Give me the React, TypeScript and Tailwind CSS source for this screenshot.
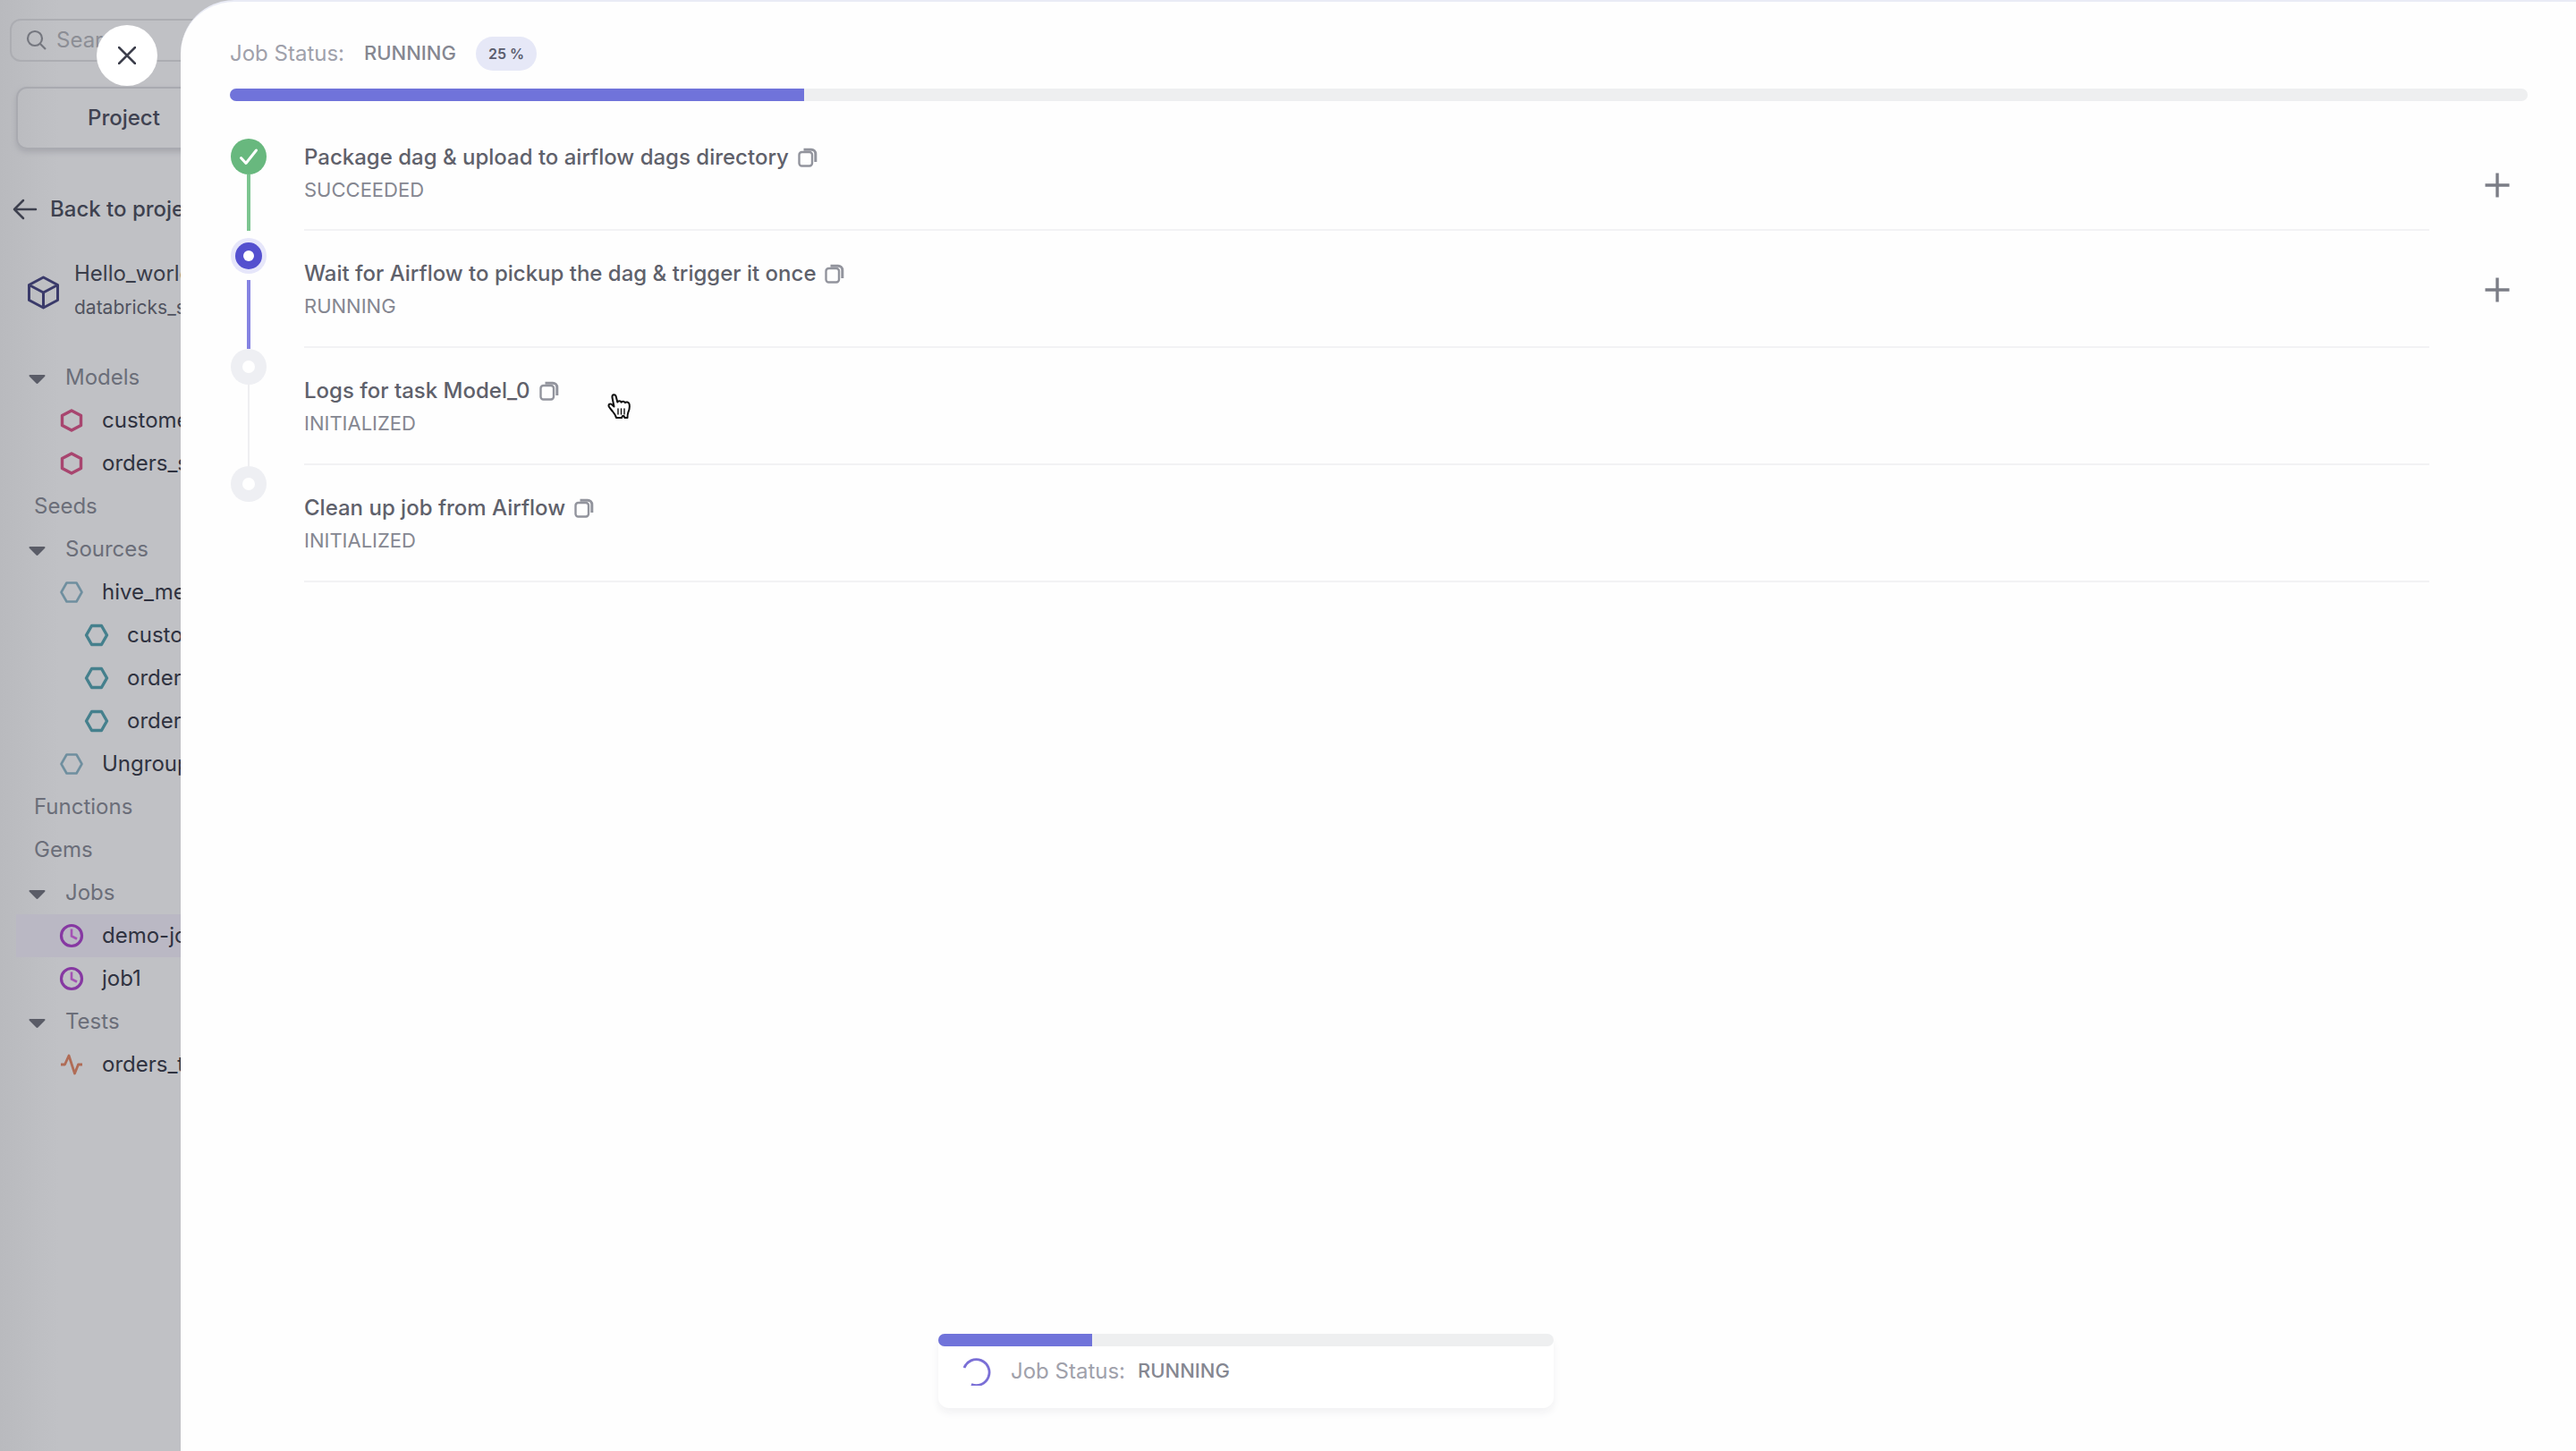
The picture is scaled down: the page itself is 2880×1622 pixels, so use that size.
import React from "react";

type TreeKind = "group" | "model" | "source" | "table" | "job" | "test" | "plain";

const tree: { label: string; kind: TreeKind; active?: boolean }[] = [
  { label: "Models", kind: "group" },
  { label: "customers", kind: "model" },
  { label: "orders_s", kind: "model" },
  { label: "Seeds", kind: "plain" },
  { label: "Sources", kind: "group" },
  { label: "hive_met", kind: "source" },
  { label: "custom", kind: "table" },
  { label: "orders", kind: "table" },
  { label: "orders", kind: "table" },
  { label: "Ungroup", kind: "source" },
  { label: "Functions", kind: "plain" },
  { label: "Gems", kind: "plain" },
  { label: "Jobs", kind: "group" },
  { label: "demo-job", kind: "job", active: true },
  { label: "job1", kind: "job" },
  { label: "Tests", kind: "group" },
  { label: "orders_t", kind: "test" },
];

const steps = [
  { title: "Package dag & upload to airflow dags directory", status: "SUCCEEDED" },
  { title: "Wait for Airflow to pickup the dag & trigger it once", status: "RUNNING" },
  { title: "Logs for task Model_0", status: "INITIALIZED" },
  { title: "Clean up job from Airflow", status: "INITIALIZED" },
];

function HexUp() {
  return (
    <svg className="size-7 shrink-0 text-[#a8456f]" viewBox="0 0 28 28" fill="none" stroke="currentColor" strokeWidth="3.400" strokeLinejoin="round">
      <path d="M14 3 24.500 8.500v11L14 25 3.500 19.500v-11z" />
    </svg>
  );
}

function HexSide({ bold }: { bold?: boolean }) {
  return (
    <svg
      className={bold ? "size-7 shrink-0 text-[#45808d]" : "size-7 shrink-0 text-[#6f8f9f]"}
      viewBox="0 0 28 28"
      fill="none"
      stroke="currentColor"
      strokeWidth={bold ? 3.4 : 2.6}
      strokeLinejoin="round"
    >
      <path d="M8.500 3.500h11L25.500 14l-6 10.500h-11L2.500 14z" />
    </svg>
  );
}

function Clock() {
  return (
    <svg className="size-7 shrink-0 text-[#8638a2]" viewBox="0 0 28 28" fill="none" stroke="currentColor" strokeWidth="3.200">
      <circle cx="14" cy="14" r="11.500" />
      <path d="M14 6.500v8l6 3" stroke="#a453b4" strokeWidth="2.600" />
    </svg>
  );
}

function Pulse() {
  return (
    <svg className="size-7 shrink-0 text-[#b06c56]" viewBox="0 0 28 28" fill="none" stroke="currentColor" strokeWidth="2.800" strokeLinejoin="round">
      <path d="M2 14h4.500L11 4l6.500 20 4-10H26" />
    </svg>
  );
}

function TreeRow({ label, kind, active }: { label: string; kind: TreeKind; active?: boolean }) {
  if (kind === "plain") {
    return <li className="flex h-12 items-center pl-[38px] text-[#6b6e79]">{label}</li>;
  }
  if (kind === "group") {
    return (
      <li className="flex h-12 items-center gap-[22px] pl-8 text-[#6b6e79]">
        <svg className="mt-1 h-2.5 w-[19px] shrink-0" viewBox="0 0 19 10" fill="#5a5c67">
          <path d="M1.500 0h16a1 1 0 0 1 .7 1.700L10.500 9.500a1.400 1.400 0 0 1-2 0L.8 1.700A1 1 0 0 1 1.500 0z" />
        </svg>
        {label}
      </li>
    );
  }
  const indent = kind === "table" ? "pl-[76px]" : "pl-12";
  return (
    <li className={`ml-[18px] flex h-12 items-center whitespace-nowrap text-[#2f3240] ${indent} ${active ? "bg-[#bab8c4]" : ""}`}>
      <span className="flex items-center gap-5">
        {kind === "model" && <HexUp />}
        {kind === "source" && <HexSide />}
        {kind === "table" && <HexSide bold />}
        {kind === "job" && <Clock />}
        {kind === "test" && <Pulse />}
        {label}
      </span>
    </li>
  );
}

function Sidebar() {
  return (
    <aside className="w-[262px] shrink-0 overflow-hidden bg-linear-to-r from-[#b9babe] to-[#c0c1c5] to-25%">
      <label className="mt-[21px] ml-[11px] flex h-12 w-[300px] items-center gap-2.5 rounded-xl border-2 border-[#acadb2] px-4">
        <svg className="size-6 shrink-0" viewBox="0 0 24 24" fill="none" stroke="#75777f" strokeWidth="2.200">
          <circle cx="10" cy="10" r="8" />
          <path d="m16 16 6 6" />
        </svg>
        <input className="w-40 bg-transparent text-2xl placeholder:text-[#8c8e95]" placeholder="Search" aria-label="Search" />
      </label>
      <button className="mt-7 ml-[18px] flex h-[70px] w-[300px] items-center rounded-xl border-2 border-[#a9aab0] pl-[78px] text-2xl font-medium text-[#3f4251] shadow-[0_3px_6px_#a6a7ad]">
        Project
      </button>
      <a href="#back" className="mt-[47px] ml-3.5 flex h-10 items-center gap-3.5 text-2xl font-medium whitespace-nowrap text-[#3e414f]">
        <svg className="h-6 w-7 shrink-0" viewBox="0 0 28 24" fill="none" stroke="currentColor" strokeWidth="2.500" strokeLinecap="round" strokeLinejoin="round">
          <path d="M26 12H2M12 2 2 12l10 10" />
        </svg>
        Back to project
      </a>
      <div className="mt-8 flex items-end gap-4 pl-[30px]">
        <svg className="mb-4 h-[38px] w-[37px] shrink-0" viewBox="0 0 37 38" fill="none" stroke="#3a3a6a" strokeWidth="3" strokeLinejoin="round">
          <path d="M18.500 2 34.500 10.500v17L18.500 36 2.500 27.500v-17zM2.500 10.500l16 8.500 16-8.500M18.500 19v17" />
        </svg>
        <div className="whitespace-nowrap">
          <div className="text-2xl leading-10 text-[#3a3d4a]">Hello_world</div>
          <div className="text-[21px] leading-9 text-[#50535f]">databricks_sql</div>
        </div>
      </div>
      <ul className="mt-9 text-2xl">
        {tree.map((t, i) => (
          <TreeRow key={i} {...t} />
        ))}
      </ul>
    </aside>
  );
}

function CopyIcon() {
  return (
    <svg className="size-[22px]" viewBox="0 0 22 22" fill="none" stroke="#92949d" strokeWidth="2.400">
      <rect x="1.500" y="5" width="14.500" height="15.500" rx="3" />
      <path d="M6.500 2.200H15a4.800 4.800 0 0 1 4.800 4.800v9" strokeWidth="3" />
    </svg>
  );
}

function PendingDot() {
  return (
    <div className="flex size-10 items-center justify-center rounded-full bg-[#eeeff3]">
      <div className="size-3.5 rounded-full bg-white" />
    </div>
  );
}

function Timeline() {
  return (
    <div className="flex w-[42px] shrink-0 flex-col items-center">
      <div className="flex size-10 items-center justify-center rounded-full bg-[#68b87e]">
        <svg className="size-6" viewBox="0 0 24 24" fill="none" stroke="#fff" strokeWidth="3" strokeLinecap="round" strokeLinejoin="round">
          <path d="m3.500 13.500 5.500 6L20.500 5" />
        </svg>
      </div>
      <div className="h-[63px] w-1 bg-[#7cc590]" />
      <div className="mt-2 flex size-10 items-center justify-center rounded-full bg-[#e6e6fa]">
        <div className="flex size-[30px] items-center justify-center rounded-full bg-[#5450cf]">
          <div className="size-3 rounded-full bg-white" />
        </div>
      </div>
      <div className="mt-[7px] h-[77px] w-1 bg-[#8583e2]" />
      <PendingDot />
      <div className="h-[91px] w-0.5 bg-[#efeff1]" />
      <PendingDot />
    </div>
  );
}

function PlusButton({ label }: { label: string }) {
  return (
    <button aria-label={label} className="flex size-10 items-center justify-center">
      <svg className="size-7" viewBox="0 0 28 28" stroke="#7b7d86" strokeWidth="3.400">
        <path d="M14 .5v27M.5 14h27" />
      </svg>
    </button>
  );
}

function ProgressBar({ value, label }: { value: number; label: string }) {
  return (
    <div className="h-3.5 overflow-hidden rounded-full bg-[#eeeff0]" role="progressbar" aria-label={label} aria-valuenow={value}>
      <div className="h-full bg-[#7073da]" style={{ width: `${value}%` }} />
    </div>
  );
}

export default function App() {
  return (
    <div className="relative flex min-h-screen overflow-hidden bg-[#c0c1c5] font-['Inter',sans-serif] text-2xl">
      <Sidebar />

      <main className="relative -ml-[60px] min-w-0 flex-1 rounded-tl-[60px] border-t-2 border-[#e9ebf5] bg-[#fefefe] pr-[54px] pl-[55px]">
        <header className="mt-[38px] flex h-10 items-center">
          <span className="text-[#a0a1ab]">Job Status:</span>
          <span className="ml-[22px] text-[22px] font-medium text-[#858791]">RUNNING</span>
          <span className="ml-[22px] flex h-[38px] items-center rounded-full bg-[#e6e8f7] px-3.5 text-base font-semibold text-[#5a5c6e]">25 %</span>
        </header>
        <div className="mt-[19px]">
          <ProgressBar value={25} label="Job progress" />
        </div>

        <div className="mt-[42px] flex">
          <Timeline />
          <ol className="ml-[41px] min-w-0 flex-1">
            {steps.map((s, i) => (
              <li key={i} className={`border-b-2 border-[#f2f2f4] ${i === 0 ? "h-[103px] pt-px" : "h-[131px] pt-[28px]"}`}>
                <div className="flex h-10 items-center gap-2.5 font-medium text-[#5f616b]">
                  {s.title}
                  <button aria-label={`Copy ${s.title}`}>
                    <CopyIcon />
                  </button>
                </div>
                <div className="text-[22px] leading-8 text-[#858791]">{s.status}</div>
              </li>
            ))}
          </ol>
          <div className="ml-14 flex w-[54px] shrink-0 flex-col gap-[77px] pt-8">
            <PlusButton label="Expand package step" />
            <PlusButton label="Expand wait step" />
          </div>
        </div>
      </main>

      <button aria-label="Close" className="absolute top-[28px] left-[108px] flex size-[68px] items-center justify-center rounded-full bg-white">
        <svg className="size-5" viewBox="0 0 20 20" stroke="#3d3f4c" strokeWidth="2.500" strokeLinecap="round">
          <path d="m1 1 18 18M19 1 1 19" />
        </svg>
      </button>

      <section className="absolute bottom-12 left-[1049px] h-[83px] w-[688px] rounded-xl bg-white shadow-[0_5px_10px_#f1f1f3]">
        <ProgressBar value={25} label="Current job progress" />
        <div className="mt-2 flex h-10 items-center pl-[27px]">
          <svg className="size-8" viewBox="0 0 32 32" fill="none" stroke="#7a6fd6" strokeWidth="2.800">
            <path d="M2 12a14.500 14.500 0 1 1 8 18.500" />
          </svg>
          <span className="ml-[22px] text-[#a0a1ab]">Job Status:</span>
          <span className="ml-3.5 text-[22px] font-medium text-[#858791]">RUNNING</span>
        </div>
      </section>

      <svg className="absolute top-[440px] left-[679px] h-[30px] w-7" viewBox="0 0 28 30" fill="#fff" stroke="#111" strokeWidth="2" strokeLinejoin="round" strokeLinecap="round">
        <path d="M7.500 14.500 5.500 4.500C5 .5 9 .2 9.800 3.500l1.500 6c.7-1.700 3.700-1.800 4.300.2.800-1.500 3.700-1.400 4.300.5 1-1.300 4-.9 4.600 1.200.8 3.600.2 6.600-1.200 9.600-.6 1.500-.8 3-.8 6h-3l-1-2h-1.500l-1 2H10c-.5-2.500-2-4.500-4-7-1.800-2.200-3-3.500-4.200-5.500-1-2.300 1-3.800 3-2.500z" />
        <path d="M12 17v6M15.500 17v6M19 17v6" strokeWidth="1.400" />
      </svg>
    </div>
  );
}
